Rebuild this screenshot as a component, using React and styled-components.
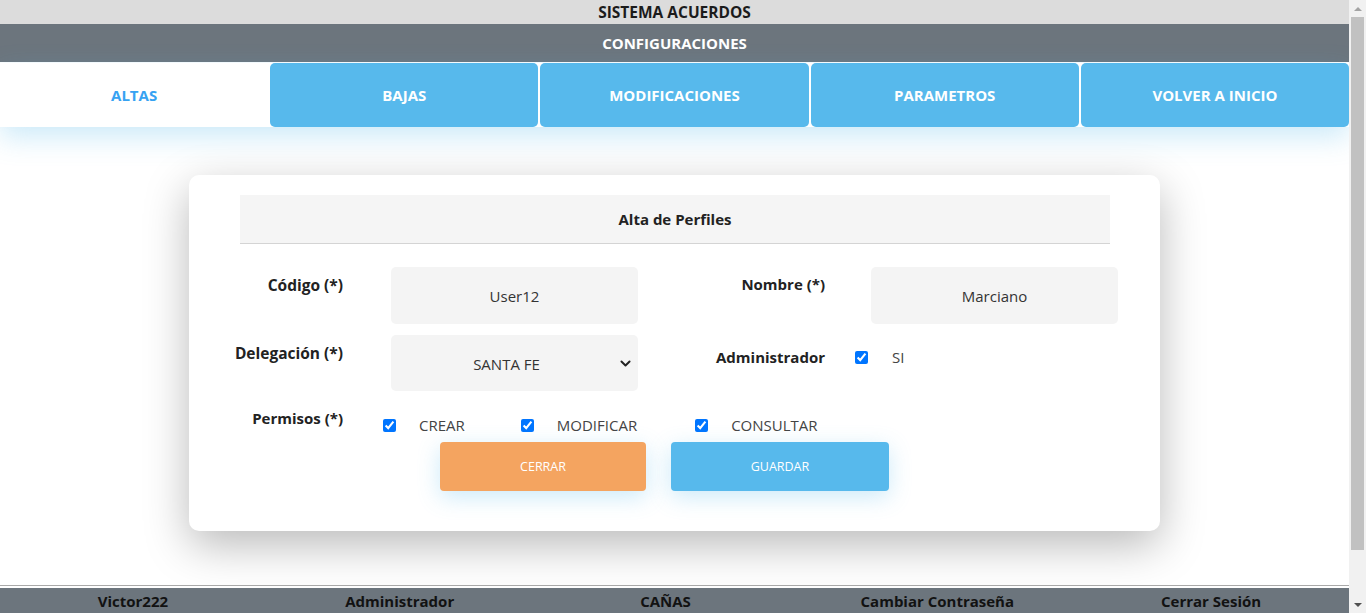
import React from "react";
import styled, { createGlobalStyle } from "styled-components";

const Global = createGlobalStyle`
  html, body { margin: 0; padding: 0; background: #fff; overflow: hidden; }
  body { font-family: "Open Sans", "Noto Sans", sans-serif; color: #212529; }
  * { box-sizing: border-box; }
`;

const Root = styled.div`
  display: flex;
  height: 100vh;
`;

const Screen = styled.div`
  flex: 1;
  min-width: 0;
  display: flex;
  flex-direction: column;
`;

const ScrollRail = styled.div`
  width: 17px;
  background: #f1f1f1;
  display: flex;
  flex-direction: column;
  align-items: center;
`;

const Arrow = styled.div`
  height: 17px;
  display: flex;
  align-items: center;
  justify-content: center;
  &::before {
    content: "";
    border-left: 4px solid transparent;
    border-right: 4px solid transparent;
    ${(p) => (p.$down ? "border-top: 4px solid #505050;" : "border-bottom: 4px solid #a3a3a3;")}
  }
`;

const Thumb = styled.div`
  width: 13px;
  height: 533px;
  background: #c1c1c1;
`;

const RailSpace = styled.div`
  flex: 1;
`;

const TitleBar = styled.div`
  height: 24px;
  background: #dcdcdc;
  display: flex;
  align-items: center;
  justify-content: center;
  font-weight: 700;
  font-size: 15.5px;
  color: #1b1b1b;
`;

const SectionBar = styled.div`
  height: 38px;
  background: #6c757d;
  display: flex;
  align-items: center;
  justify-content: center;
  font-weight: 700;
  font-size: 15px;
  color: #fff;
`;

const Tabs = styled.nav`
  margin-top: 1px;
  display: grid;
  grid-template-columns: repeat(5, 1fr);
  gap: 2px;
  box-shadow: 0 10px 28px rgba(87, 185, 236, 0.3);
`;

const Tab = styled.button`
  height: 64px;
  border: none;
  border-radius: 5px;
  font-family: inherit;
  font-weight: 700;
  font-size: 15px;
  background: ${(p) => (p.$active ? "#fff" : "#57b9ec")};
  color: ${(p) => (p.$active ? "#36a2f2" : "#fff")};
  cursor: pointer;
`;

const Main = styled.main`
  flex: 1;
  padding-top: 48px;
  display: flex;
  justify-content: center;
  align-items: flex-start;
`;

const Card = styled.section`
  width: 971px;
  background: #fff;
  border-radius: 10px;
  box-shadow: 0 14px 45px rgba(0, 0, 0, 0.28);
  padding: 20px 42px 40px 11px;
`;

const CardHeader = styled.div`
  margin: 0 8px 0 40px;
  height: 49px;
  background: #f5f5f5;
  border-bottom: 1px solid #d4d4d4;
  display: flex;
  align-items: center;
  justify-content: center;
  font-weight: 700;
  font-size: 15px;
  color: #222;
`;

const FormGrid = styled.div`
  margin-top: 23px;
  display: grid;
  grid-template-columns: 191px 247px 233px 247px;
  row-gap: 11px;
  align-items: start;
`;

const Label = styled.label`
  text-align: right;
  padding-right: ${(p) => p.$pr || 48}px;
  padding-top: ${(p) => p.$pt || 7}px;
  font-weight: 700;
  font-size: ${(p) => p.$fs || 15}px;
  color: #222;
`;

const TextInput = styled.input`
  height: 57px;
  width: 247px;
  border: none;
  border-radius: 5px;
  background: #f4f4f4;
  text-align: center;
  font-family: inherit;
  font-size: 15px;
  color: #333;
  outline: none;
`;

const SelectWrap = styled.div`
  position: relative;
  width: 247px;
  height: 56px;
`;

const Select = styled.select`
  appearance: none;
  width: 100%;
  height: 100%;
  border: none;
  border-radius: 5px;
  background: #f4f4f4;
  text-align: center;
  text-align-last: center;
  font-family: inherit;
  font-size: 15px;
  color: #333;
  padding: 2px 16px 0 0;
  outline: none;
`;

const Chevron = styled.svg`
  position: absolute;
  right: 6px;
  top: 22px;
  width: 13px;
  height: 13px;
  pointer-events: none;
`;

const CheckLine = styled.div`
  display: flex;
  align-items: center;
  padding-top: ${(p) => p.$pt || 0}px;
  margin-left: ${(p) => p.$ml || 0}px;
  grid-column: ${(p) => p.$span || "auto"};
`;

const CheckItem = styled.label`
  display: flex;
  align-items: center;
  margin-right: ${(p) => p.$mr || 0}px;
  font-size: 15px;
  color: #444;
  input {
    margin: 0;
    width: 13px;
    height: 13px;
    accent-color: #0075ff;
  }
  span {
    margin-left: ${(p) => p.$gap || 23}px;
  }
`;

const Buttons = styled.div`
  grid-column: 1 / -1;
  display: flex;
  gap: 25px;
  margin-top: -4px;
  padding-left: 240px;
`;

const Button = styled.button`
  width: ${(p) => p.$w}px;
  height: 49px;
  border: none;
  border-radius: 4px;
  background: ${(p) => p.$bg};
  color: #fff;
  font-family: inherit;
  font-size: 12.5px;
  box-shadow: 0 6px 22px rgba(87, 185, 236, 0.3);
  cursor: pointer;
`;

const Footer = styled.footer`
  border-top: 1px solid #a9a9a9;
  padding-top: 2px;
  background: #fff;
`;

const FooterBar = styled.div`
  height: 25px;
  background: #6c757d;
  display: grid;
  grid-template-columns: repeat(5, 1fr);
  align-items: center;
  font-weight: 700;
  font-size: 15px;
  color: #121212;
  padding-top: 1px;
`;

const FooterItem = styled.div`
  text-align: center;
  margin-left: ${(p) => p.$ml || -8}px;
`;

export default function App() {
  const tabs = ["ALTAS", "BAJAS", "MODIFICACIONES", "PARAMETROS", "VOLVER A INICIO"];
  const footer = [
    ["Victor222", -4],
    ["Administrador", -10],
    ["CAÑAS", -18],
    ["Cambiar Contraseña", -14],
    ["Cerrar Sesión", -6],
  ];
  return (
    <>
      <Global />
      <Root>
        <Screen>
          <TitleBar>SISTEMA ACUERDOS</TitleBar>
          <SectionBar>CONFIGURACIONES</SectionBar>
          <Tabs>
            {tabs.map((t, i) => (
              <Tab key={t} $active={i === 0}>
                {t}
              </Tab>
            ))}
          </Tabs>
          <Main>
            <Card>
              <CardHeader>Alta de Perfiles</CardHeader>
              <FormGrid>
                <Label $fs={15.5}>Código (*)</Label>
                <TextInput defaultValue="User12" />
                <Label $pr={46}>Nombre (*)</Label>
                <TextInput defaultValue="Marciano" />

                <Label $fs={15.5}>Delegación (*)</Label>
                <SelectWrap>
                  <Select defaultValue="SANTA FE">
                    <option>SANTA FE</option>
                  </Select>
                  <Chevron viewBox="0 0 16 16">
                    <path d="M3 5.5 L8 10.5 L13 5.5" fill="none" stroke="#222" strokeWidth="2.4" strokeLinecap="round" strokeLinejoin="round" />
                  </Chevron>
                </SelectWrap>
                <Label $pr={46} $pt={12}>Administrador</Label>
                <CheckLine $pt={12} $ml={-16}>
                  <CheckItem $gap={24}>
                    <input type="checkbox" defaultChecked />
                    <span>SI</span>
                  </CheckItem>
                </CheckLine>

                <Label $pt={6}>Permisos (*)</Label>
                <CheckLine $pt={13} $ml={-8} $span="2 / -1">
                  <CheckItem $mr={56}>
                    <input type="checkbox" defaultChecked />
                    <span>CREAR</span>
                  </CheckItem>
                  <CheckItem $mr={58}>
                    <input type="checkbox" defaultChecked />
                    <span>MODIFICAR</span>
                  </CheckItem>
                  <CheckItem>
                    <input type="checkbox" defaultChecked />
                    <span>CONSULTAR</span>
                  </CheckItem>
                </CheckLine>

                <Buttons>
                  <Button $w={206} $bg="#f4a460">CERRAR</Button>
                  <Button $w={218} $bg="#57b9ec">GUARDAR</Button>
                </Buttons>
              </FormGrid>
            </Card>
          </Main>
          <Footer>
            <FooterBar>
              {footer.map(([f, ml]) => (
                <FooterItem key={f} $ml={ml}>
                  {f}
                </FooterItem>
              ))}
            </FooterBar>
          </Footer>
        </Screen>
        <ScrollRail aria-hidden="true">
          <Arrow />
          <Thumb />
          <RailSpace />
          <Arrow $down />
        </ScrollRail>
      </Root>
    </>
  );
}
